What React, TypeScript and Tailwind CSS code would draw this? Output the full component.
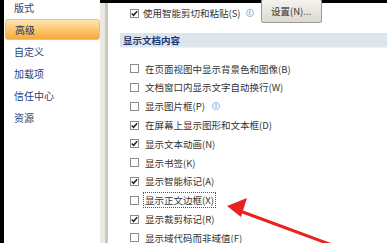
import React from 'react'

const navItems = ['版式', '高级', '自定义', '加载项', '信任中心', '资源']

const rows = [
  { label: '在页面视图中显示背景色和图像(B)', checked: false },
  { label: '文档窗口内显示文字自动换行(W)', checked: false },
  { label: '显示图片框(P)', checked: false, info: true },
  { label: '在屏幕上显示图形和文本框(D)', checked: true },
  { label: '显示文本动画(N)', checked: true },
  { label: '显示书签(K)', checked: false },
  { label: '显示智能标记(A)', checked: true },
  { label: '显示正文边框(X)', checked: false, focus: true },
  { label: '显示裁剪标记(R)', checked: true },
  { label: '显示域代码而非域值(F)', checked: false },
]

function Box({ checked }: { checked: boolean }) {
  return (
    <span className="w-[9px] h-[9px] border border-[#8c8c8c] bg-white flex items-center justify-center shrink-0">
      {checked && (
        <svg width="7" height="7" viewBox="0 0 7 7">
          <path d="M0.8 3.4 L2.6 5.3 L6.2 1.2" fill="none" stroke="#222" strokeWidth="1.5" />
        </svg>
      )}
    </span>
  )
}

function Info() {
  return (
    <span className="w-[8px] h-[8px] rounded-full border border-[#8fb4de] text-[#6b9bd2] text-[6px] leading-none flex items-center justify-center font-bold ml-[5px]">i</span>
  )
}

export default function App() {
  return (
    <div className="w-[387px] h-[243px] overflow-hidden bg-black pt-[3px] pl-[4px] flex relative" style={{ fontFamily: '"Noto Sans CJK SC", "Noto Sans", sans-serif' }}>
      {/* left nav */}
      <div className="w-[96px] bg-white flex flex-col -mt-[7px]">
        {navItems.map((item, i) => (
          <div key={item} className="h-[22px] flex items-center">
            {i === 1 ? (
              <div className="ml-[1px] w-[95px] h-[21px] rounded-[3px] border border-[#f0c070] bg-gradient-to-b from-[#fde7b4] via-[#fbc66e] to-[#f8a93c] flex items-center pl-[9px] text-[10px] text-[#1f2f5f]">{item}</div>
            ) : (
              <span className="pl-[10px] text-[10px] text-[#27407a]">{item}</span>
            )}
          </div>
        ))}
      </div>
      {/* divider */}
      <div className="w-[5px] bg-[#ebe9e3]" />
      <div className="w-[3px] bg-[#cac7bf]" />
      {/* content */}
      <div className="flex-1 bg-white flex flex-col text-[9.5px] text-[#333]">
        <div className="h-[21px] flex items-center pl-[22px]">
          <Box checked />
          <span className="ml-[4px]">使用智能剪切和粘贴(S)</span>
          <Info />
          <div className="ml-[7px] -mt-[4px] w-[61px] h-[24px] border border-[#9c9a94] rounded-[2px] bg-gradient-to-b from-[#f4f3ee] to-[#dcd9cf] flex items-center justify-center">设置(N)...</div>
        </div>
        <div className="mt-[10px] ml-[12px] h-[19px] bg-[#dde5ec] border-b border-[#eef2f5] flex items-center pl-[3px] font-bold text-[#1d3570]">显示文档内容</div>
        <div className="mt-[11px] flex flex-col">
          {rows.map(r => (
            <div key={r.label} className="h-[18.8px] flex items-center pl-[22px]">
              <Box checked={r.checked} />
              <span className={`ml-[4px] px-[1px] ${r.focus ? 'border border-dotted border-[#555]' : 'border border-transparent'}`}>{r.label}</span>
              {r.info && <Info />}
            </div>
          ))}
        </div>
      </div>
      {/* red arrow */}
      <svg className="absolute inset-0 pointer-events-none" width="387" height="243" viewBox="0 0 387 243">
        <line x1="332" y1="245" x2="240" y2="211" stroke="#e8231f" strokeWidth="3" strokeLinecap="round" />
        <path d="M227 206 L247 198 L241 217 Z" fill="#e8231f" />
      </svg>
    </div>
  )
}
